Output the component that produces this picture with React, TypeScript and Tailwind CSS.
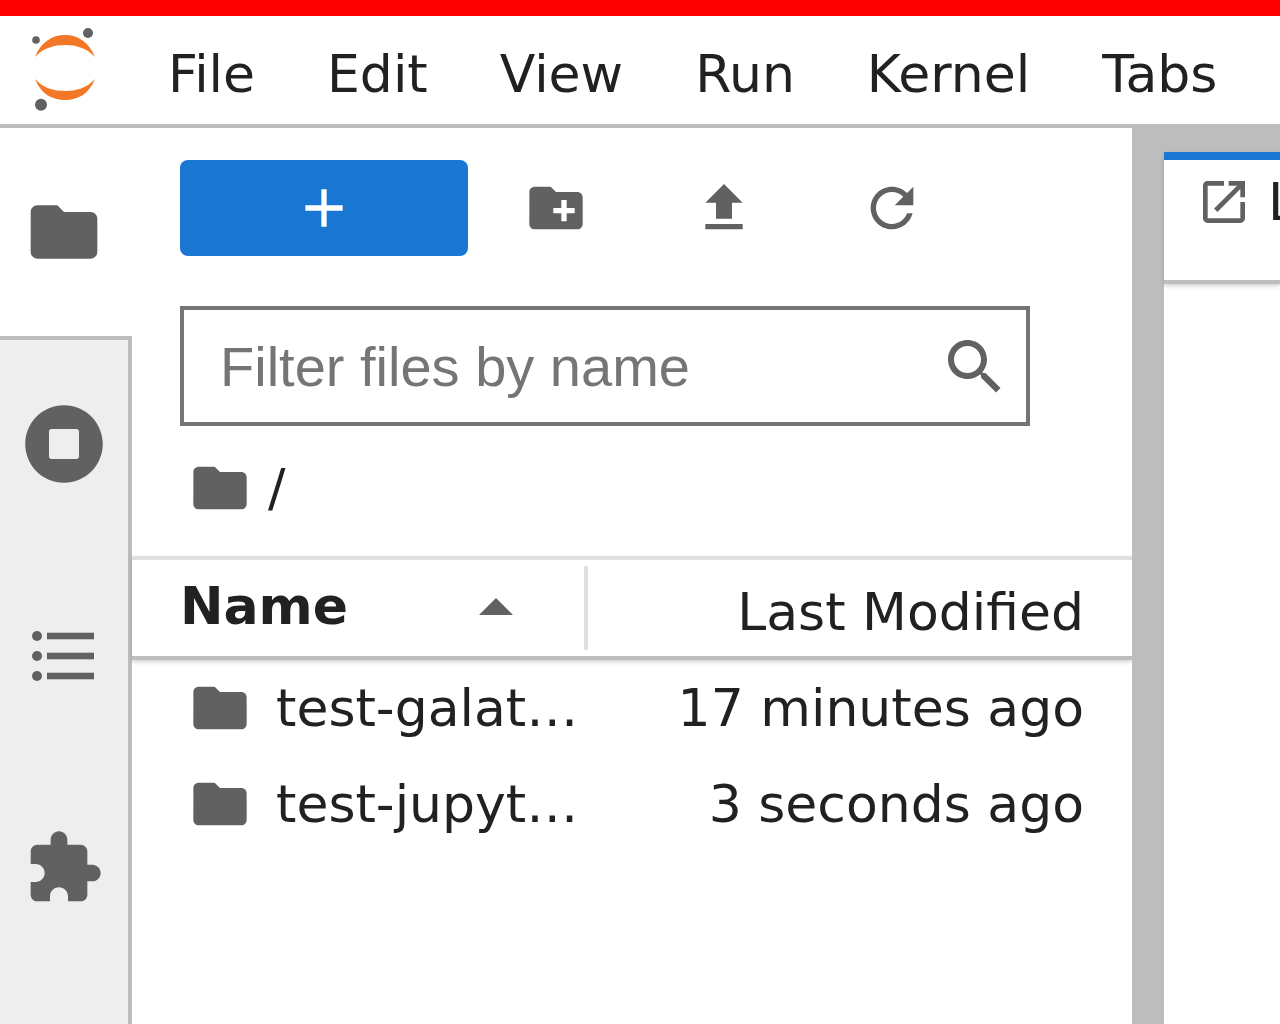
import { ReactNode } from 'react';

const ICON = '#616161';

const paths = {
  folder: 'M10 4H4c-1.1 0-1.99.9-1.99 2L2 18c0 1.1.9 2 2 2h16c1.1 0 2-.9 2-2V8c0-1.1-.9-2-2-2h-8l-2-2z',
  newFolder: 'M20 6h-8l-2-2H4c-1.11 0-1.99.89-1.99 2L2 18c0 1.11.89 2 2 2h16c1.11 0 2-.89 2-2V8c0-1.11-.89-2-2-2zm-1 8h-3v3h-2v-3h-3v-2h3V9h2v3h3v2z',
  upload: 'M9 16h6v-6h4l-7-7-7 7h4zm-4 2h14v2H5z',
  refresh: 'M17.65 6.35C16.2 4.9 14.21 4 12 4c-4.42 0-7.99 3.58-7.99 8s3.57 8 7.99 8c3.73 0 6.84-2.55 7.73-6h-2.08c-.82 2.33-3.04 4-5.65 4-3.31 0-6-2.69-6-6s2.69-6 6-6c1.66 0 3.14.69 4.22 1.78L13 11h7V4l-2.35 2.35z',
  search: 'M15.5 14h-.79l-.28-.27C15.41 12.59 16 11.11 16 9.5 16 5.91 13.09 3 9.5 3S3 5.91 3 9.5 5.91 16 9.5 16c1.61 0 3.09-.59 4.23-1.57l.27.28v.79l5 4.99L20.49 19l-4.99-5zm-6 0C7.01 14 5 11.99 5 9.5S7.01 5 9.5 5 14 7.01 14 9.5 11.99 14 9.5 14z',
  extension: 'M20.5 11H19V7c0-1.1-.9-2-2-2h-4V3.5C13 2.12 11.88 1 10.5 1S8 2.12 8 3.5V5H4c-1.1 0-1.99.9-1.99 2v3.8H3.5c1.49 0 2.7 1.21 2.7 2.7s-1.21 2.7-2.7 2.7H2V20c0 1.1.9 2 2 2h3.8v-1.5c0-1.49 1.21-2.7 2.7-2.7 1.49 0 2.7 1.21 2.7 2.7V22H17c1.1 0 2-.9 2-2v-4h1.5c1.38 0 2.5-1.12 2.5-2.5S21.88 11 20.5 11z',
  launch: 'M19 19H5V5h7V3H5c-1.11 0-2 .9-2 2v14c0 1.1.89 2 2 2h14c1.1 0 2-.9 2-2v-7h-2v7zM14 3v2h3.59l-9.83 9.83 1.41 1.41L19 6.41V10h2V3h-7z',
  add: 'M19 13h-6v6h-2v-6H5v-2h6V5h2v6h6v2z',
};

const Icon = ({ d, className, fill = ICON }: { d: string; className: string; fill?: string }) => (
  <svg viewBox="0 0 24 24" className={className} fill={fill}>
    <path d={d} />
  </svg>
);

const JupyterLogo = () => (
  <svg viewBox="0 0 64 84" className="w-[64px] h-[84px] shrink-0">
    <path d="M3 29C9 14 20 7 33 7s24 7 30 22C55 20 44 17 33 17S11 20 3 29z" fill="#f37726" />
    <path d="M3 51c8 9 19 12 30 12s22-3 30-12c-6 15-17 21-30 21S9 66 3 51z" fill="#f37726" />
    <circle cx="56" cy="5" r="5" fill={ICON} />
    <circle cx="4" cy="12" r="3.8" fill={ICON} />
    <circle cx="9" cy="76.7" r="6" fill={ICON} />
  </svg>
);

const SideTab = ({ active, children }: { active?: boolean; children: ReactNode }) => (
  <div className={`h-[208px] flex items-center justify-center ${active ? 'bg-white' : ''}`}>{children}</div>
);

const files = [
  { name: 'test-galat…', modified: '17 minutes ago' },
  { name: 'test-jupyt…', modified: '3 seconds ago' },
];

export default function App() {
  return (
    <div className="w-[1280px] h-[1024px] overflow-hidden flex flex-col bg-white text-[#212121] text-[52px] font-['DejaVu_Sans',sans-serif]">
      <div className="h-4 bg-[#ff0000] shrink-0" />

      <div className="h-[112px] shrink-0 flex items-center border-b-4 border-[#bdbdbd] pl-8">
        <JupyterLogo />
        <nav className="flex gap-[72px] pl-[72px] leading-none pt-[7px]">
          {['File', 'Edit', 'View', 'Run', 'Kernel', 'Tabs'].map((m) => (
            <span key={m}>{m}</span>
          ))}
        </nav>
      </div>

      <div className="flex-1 flex min-h-0">
        <aside className="w-[132px] shrink-0 flex flex-col">
          <SideTab active>
            <Icon d={paths.folder} className="w-20 h-20 mr-1" />
          </SideTab>
          <div className="flex-1 flex flex-col gap-1 bg-[#eeeeee] border-t-4 border-r-4 border-[#bdbdbd]">
            <SideTab>
              <svg viewBox="0 0 512 512" className="w-20 h-20" fill={ICON}>
                <path d="M256 8C119 8 8 119 8 256s111 248 248 248 248-111 248-248S393 8 256 8zm96 328c0 8.8-7.2 16-16 16H176c-8.8 0-16-7.2-16-16V176c0-8.8 7.2-16 16-16h160c8.8 0 16 7.2 16 16v160z" />
              </svg>
            </SideTab>
            <SideTab>
              <svg viewBox="0 0 80 80" className="w-20 h-20" fill={ICON}>
                <circle cx="13" cy="20" r="5" />
                <rect x="23" y="16.7" width="47" height="6.6" />
                <circle cx="13" cy="40" r="5" />
                <rect x="23" y="36.7" width="47" height="6.6" />
                <circle cx="13" cy="60" r="5" />
                <rect x="23" y="56.7" width="47" height="6.6" />
              </svg>
            </SideTab>
            <SideTab>
              <Icon d={paths.extension} className="w-20 h-20" />
            </SideTab>
          </div>
        </aside>

        <section className="w-[1000px] shrink-0 flex flex-col">
          <div className="flex items-center pl-12 pt-8">
            <button className="w-[288px] h-24 mr-1 bg-[#1976d2] rounded-lg flex items-center justify-center">
              <Icon d={paths.add} className="w-16 h-16" fill="#ffffff" />
            </button>
            <div className="w-[168px] flex justify-center">
              <Icon d={paths.newFolder} className="w-16 h-16" />
            </div>
            <div className="w-[168px] flex justify-center">
              <Icon d={paths.upload} className="w-16 h-16" />
            </div>
            <div className="w-[168px] flex justify-center">
              <Icon d={paths.refresh} className="w-16 h-16" />
            </div>
          </div>

          <div className="mt-[50px] ml-12 w-[850px] h-[120px] border-4 border-[#757575] flex items-center pl-9 pr-[15px]">
            <input
              placeholder="Filter files by name"
              className="flex-1 min-w-0 pt-[2px] outline-none bg-transparent text-[56px] placeholder:text-[#757575] font-['Liberation_Sans',sans-serif]"
            />
            <Icon d={paths.search} className="w-[72px] h-[72px] shrink-0 mt-[1px]" />
          </div>

          <div className="h-[130px] pl-14 pb-[6px] flex items-center gap-4">
            <Icon d={paths.folder} className="w-16 h-16" />
            <span className="leading-none">/</span>
          </div>

          <div className="h-[104px] shrink-0 flex border-t-4 border-b-4 border-t-[#e0e0e0] border-b-[#bdbdbd] shadow-[0_2px_4px_rgba(0,0,0,0.18)]">
            <div className="w-[452px] shrink-0 flex items-center pl-12 pr-[71px] justify-between">
              <span className="font-bold leading-none pb-[4px]">Name</span>
              <svg viewBox="0 0 34 17" className="w-[34px] h-[17px] mt-[-3px]" fill={ICON}>
                <path d="M17 0l17 17H0z" />
              </svg>
            </div>
            <div className="flex-1 my-[6px] border-l-4 border-[#e0e0e0] flex items-center justify-end pr-12 leading-none">
              <span className="pt-2">Last Modified</span>
            </div>
          </div>

          {files.map((f) => (
            <div key={f.name} className="h-24 shrink-0 flex items-center pl-14 pr-12">
              <Icon d={paths.folder} className="w-16 h-16 shrink-0" />
              <span className="ml-6 whitespace-nowrap leading-[1.25]">{f.name}</span>
              <span className="flex-1 text-right whitespace-nowrap leading-[1.25]">{f.modified}</span>
            </div>
          ))}
        </section>

        <main className="flex-1 min-w-0 bg-[#bdbdbd] pl-8 pt-6 overflow-hidden">
          <div className="h-full bg-white">
            <div className="h-[132px] border-t-8 border-b-4 border-t-[#1976d2] border-b-[#bdbdbd] shadow-[0_2px_4px_rgba(0,0,0,0.18)] flex items-center pl-8 pb-[36px]">
              <Icon d={paths.launch} className="w-14 h-14 shrink-0" />
              <span className="ml-4 leading-none">Launcher</span>
            </div>
          </div>
        </main>
      </div>
    </div>
  );
}
